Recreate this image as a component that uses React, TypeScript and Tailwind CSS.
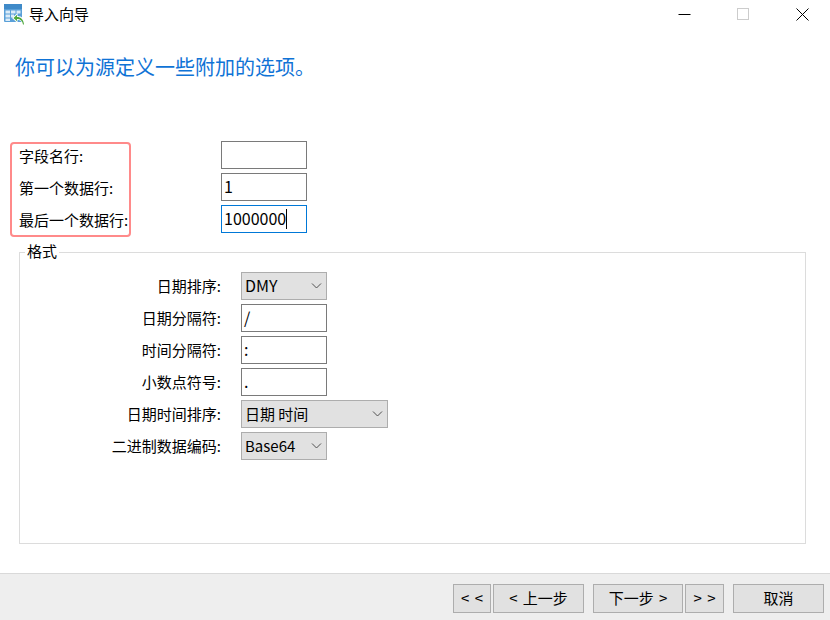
const font = "font-['Noto_Sans_CJK_SC','Noto_Sans',sans-serif]";

function Chevron() {
  return (
    <svg width="11" height="6" viewBox="0 0 11 6" fill="none" className="shrink-0">
      <path d="M1 0.5 L5.5 5 L10 0.5" stroke="#505050" strokeWidth="1" />
    </svg>
  );
}

function Field({ value, focus, caret }: { value?: string; focus?: boolean; caret?: boolean }) {
  return (
    <div className={`w-[86px] h-[28px] border bg-white flex items-center pl-[2px] text-[16px] leading-none text-black ${focus ? "border-[#0078d7]" : "border-[#7a7a7a]"}`}>
      <span className="pb-[2px]">{value}</span>
      {caret && <span className="w-px h-[20px] bg-black" />}
    </div>
  );
}

function Select({ value, wide, size }: { value: string; wide?: boolean; size: string }) {
  return (
    <div className={`${wide ? "w-[147px]" : "w-[86px]"} ${size} h-[28px] border border-[#adadad] bg-[#e1e1e1] flex items-center justify-between pl-[3px] pr-[4px] leading-none text-black`}>
      <span className="pb-[2px]">{value}</span>
      <Chevron />
    </div>
  );
}

function FormatRow({ label, children }: { label: string; children: React.ReactNode }) {
  return (
    <div className="flex items-center h-[28px]">
      <div className="w-[201px] pb-[2px] text-right text-[15px] leading-none text-black">{label}</div>
      <div className="ml-[20px]">{children}</div>
    </div>
  );
}

function Btn({ w, ml, children }: { w: string; ml: string; children: React.ReactNode }) {
  return (
    <div className={`${w} ${ml} h-[29px] pb-[2px] border border-[#adadad] bg-[#e1e1e1] flex items-center justify-center text-[15px] leading-none text-black [word-spacing:2px]`}>
      {children}
    </div>
  );
}

export default function App() {
  return (
    <div className={`${font} w-[830px] h-[620px] bg-white flex flex-col overflow-hidden`}>
      <div className="h-[28px] flex items-center pl-[4px] shrink-0">
        <svg width="21" height="21" viewBox="0 0 21 21" className="shrink-0 mt-[1px]">
          <rect x="0" y="0" width="18" height="18" rx="1" fill="#5aa0d8" />
          <rect x="0" y="0" width="18" height="5" fill="#3f8ac8" />
          <path d="M1.5 6.5h4.5v3H1.5zM7 6.5h4.5v3H7zM12.5 6.5h4v3h-4zM1.5 10.5h4.5v3H1.5zM7 10.5h3v3H7zM1.5 14.5h4.5v2.5H1.5z" fill="#dcecf8" />
          <path d="M8 14 L13.5 9 V12 C18 12 20.5 15 21 21 H18.5 C18.5 17.5 16.5 16 13.5 16 V19 Z" fill="#ffffff" />
          <path d="M9.5 14 L13 10.8 V13 C17 13 19.5 15.5 20 20.5 H19 C18.5 17 16.5 15 13 15 V17.2 Z" fill="#4fa83d" />
        </svg>
        <span className="ml-[4px] pb-[1px] text-[15px] leading-none text-black">导入向导</span>
        <div className="ml-auto flex items-center h-full">
          <svg width="13" height="13" viewBox="0 0 13 13" className="mr-[46px]"><path d="M0.5 6.5H12.5" stroke="#000" /></svg>
          <svg width="13" height="13" viewBox="0 0 13 13" className="mr-[46px]"><rect x="0.5" y="0.5" width="11" height="11" fill="none" stroke="#ccc" /></svg>
          <svg width="13" height="13" viewBox="0 0 13 13" className="mr-[21px]"><path d="M0.5 0.5L12.5 12.5M12.5 0.5L0.5 12.5" stroke="#000" /></svg>
        </div>
      </div>

      <div className="h-[113px] shrink-0 pl-[15px] pt-[25px] text-[20px] leading-[28px] text-[#0f73d6]">
        你可以为源定义一些附加的选项。
      </div>

      <div className="flex items-start shrink-0">
        <div className="ml-[10px] mt-[1px] w-[121px] h-[95px] border-2 border-[#ff8a8a] rounded-[4px] pl-[7px] flex flex-col gap-[8px] text-[15px] leading-none text-black">
          <div className="h-[24px] pb-[2px] flex items-center whitespace-nowrap">字段名行:</div>
          <div className="h-[24px] pb-[2px] flex items-center whitespace-nowrap">第一个数据行:</div>
          <div className="h-[24px] pb-[2px] flex items-center whitespace-nowrap">最后一个数据行:</div>
        </div>
        <div className="ml-[90px] flex flex-col gap-[4px]">
          <Field />
          <Field value="1" />
          <Field value="1000000" focus caret />
        </div>
      </div>

      <div className="relative ml-[19px] mt-[15px] w-[787px] h-[292px] shrink-0 border border-[#dcdcdc] pt-[19px]">
        <span className="absolute left-[5px] top-[-11px] bg-white px-[2px] text-[15px] leading-[18px] text-black">格式</span>
        <div className="flex flex-col gap-[4px]">
          <FormatRow label="日期排序:"><Select value="DMY" size="text-[16px]" /></FormatRow>
          <FormatRow label="日期分隔符:"><Field value="/" /></FormatRow>
          <FormatRow label="时间分隔符:"><Field value=":" /></FormatRow>
          <FormatRow label="小数点符号:"><Field value="." /></FormatRow>
          <FormatRow label="日期时间排序:"><Select value="日期 时间" size="text-[15px]" wide /></FormatRow>
          <FormatRow label="二进制数据编码:"><Select value="Base64" size="text-[15px]" /></FormatRow>
        </div>
      </div>

      <div className="mt-[29px] flex-1 border-t border-[#d9d9d9] bg-[#eeeeee] flex items-start pt-[10px] pl-[453px]">
        <Btn w="w-[38px]" ml="ml-0">&lt; &lt;</Btn>
        <Btn w="w-[91px]" ml="ml-[2px]">&lt; 上一步</Btn>
        <Btn w="w-[90px]" ml="ml-[9px]">下一步 &gt;</Btn>
        <Btn w="w-[39px]" ml="ml-[2px]">&gt; &gt;</Btn>
        <Btn w="w-[91px]" ml="ml-[9px]">取消</Btn>
      </div>
    </div>
  );
}
